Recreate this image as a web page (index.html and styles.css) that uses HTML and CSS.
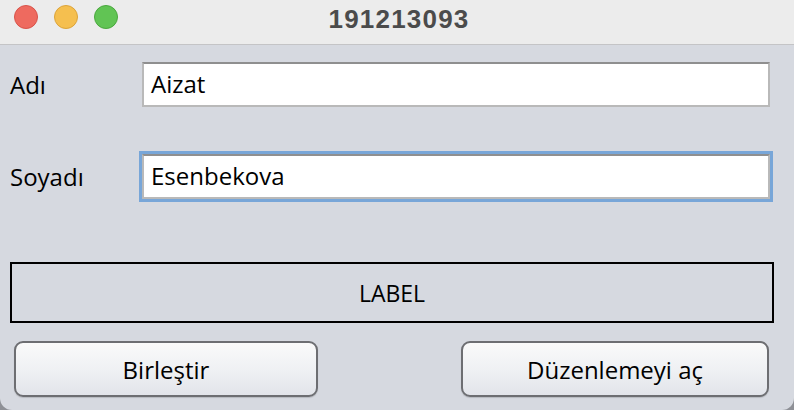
FILE: index.html
```html
<!DOCTYPE html>
<html>
<head>
<meta charset="utf-8">
<link rel="stylesheet" href="styles.css">
</head>
<body>
<div class="window">
  <div class="titlebar">
    <div class="lights">
      <span class="light red"></span>
      <span class="light yellow"></span>
      <span class="light green"></span>
    </div>
    <div class="title">191213093</div>
  </div>
  <div class="content">
    <div class="row row-first">
      <div class="lbl">Adı</div>
      <div class="field">Aizat</div>
    </div>
    <div class="row row-second">
      <div class="lbl">Soyadı</div>
      <div class="field focused">Esenbekova</div>
    </div>
    <div class="labelbox">LABEL</div>
    <div class="buttons">
      <div class="btn btn-left">Birleştir</div>
      <div class="btn btn-right">Düzenlemeyi aç</div>
    </div>
  </div>
</div>
</body>
</html>
```
FILE: styles.css
```css
html, body {
  margin: 0;
  padding: 0;
  background: #8e9096;
}
.window {
  width: 794px;
  height: 410px;
  background: #d6d9e0;
  border-radius: 0 0 12px 12px;
  overflow: hidden;
  font-family: "Open Sans", "DejaVu Sans", sans-serif;
  color: #000;
}
.titlebar {
  height: 44px;
  background: #ececec;
  border-bottom: 1px solid #c4c4c6;
  position: relative;
  display: flex;
  align-items: center;
  justify-content: center;
}
.lights {
  position: absolute;
  left: 14px;
  top: 5px;
  display: flex;
  gap: 16px;
}
.light {
  width: 24px;
  height: 24px;
  border-radius: 50%;
  box-sizing: border-box;
}
.red { background: #ee6a5f; border: 1px solid #d9534a; }
.yellow { background: #f5bf4f; border: 1px solid #dca43a; }
.green { background: #61c454; border: 1px solid #4aa83e; }
.title {
  font-family: "Liberation Sans", Arial, sans-serif;
  font-weight: bold;
  font-size: 26px;
  letter-spacing: 1.2px;
  color: #4b4b4b;
  margin-top: -6px;
  margin-left: 4px;
}
.content {
  padding: 0 0 0 10px;
}
.row {
  display: flex;
  align-items: center;
}
.row-first { margin-top: 17px; }
.row-second { margin-top: 47px; }
.lbl {
  width: 132px;
  font-size: 24px;
  font-weight: 500;
}
.field {
  width: 628px;
  height: 45px;
  box-sizing: border-box;
  background: #fff;
  border: 2px solid #b9b9b9;
  border-top-color: #8f8f8f;
  padding-left: 7px;
  font-size: 24px;
  font-weight: 500;
  line-height: 39px;
}
.field.focused {
  outline: 3px solid #78a6d8;
  outline-offset: 0;
}
.labelbox {
  margin-top: 63px;
  width: 764px;
  height: 61px;
  box-sizing: border-box;
  border: 2px solid #000;
  display: flex;
  align-items: center;
  justify-content: center;
  font-size: 23px;
  font-weight: 500;
}
.buttons {
  margin-top: 18px;
  display: flex;
  justify-content: space-between;
  margin-left: 4px;
  width: 755px;
}
.btn {
  height: 56px;
  box-sizing: border-box;
  border: 2px solid #6d6e72;
  border-radius: 9px;
  background: linear-gradient(#fafafa, #eef0f3 55%, #e2e4ea);
  display: flex;
  align-items: center;
  justify-content: center;
  font-size: 24px;
  font-weight: 500;
  box-shadow: 0 1px 1px rgba(0,0,0,0.15);
}
.btn-left { width: 304px; }
.btn-right { width: 308px; }
```
